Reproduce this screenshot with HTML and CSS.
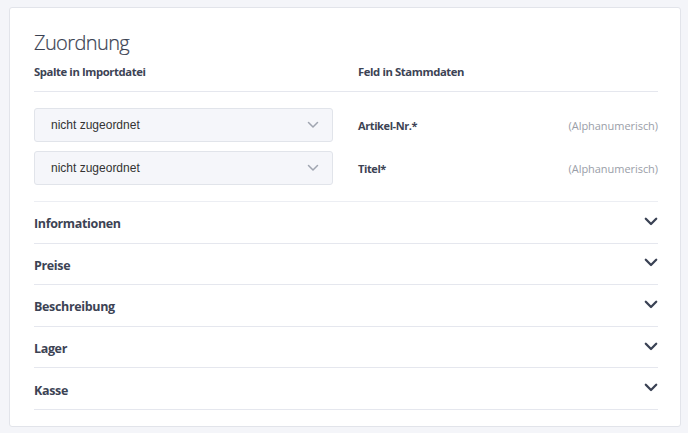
FILE: index.html
```html
<!DOCTYPE html>
<html lang="de">
<head>
<meta charset="utf-8">
<link rel="stylesheet" href="styles.css">
</head>
<body>
<div class="card">
  <h1 class="title">Zuordnung</h1>
  <div class="grid head">
    <div class="colhead">Spalte in Importdatei</div>
    <div class="colhead">Feld in Stammdaten</div>
  </div>
  <div class="mapping">
    <div class="grid maprow">
      <div class="select"><span>nicht zugeordnet</span>
        <svg class="sel-chev" viewBox="0 0 12 8" width="12" height="8"><path d="M1.5 1.5 L6 6 L10.5 1.5" fill="none" stroke="currentColor" stroke-width="1.5" stroke-linecap="round" stroke-linejoin="round"/></svg>
      </div>
      <div class="field"><span class="fname">Artikel-Nr.*</span><span class="ftype">(Alphanumerisch)</span></div>
    </div>
    <div class="grid maprow">
      <div class="select"><span>nicht zugeordnet</span>
        <svg class="sel-chev" viewBox="0 0 12 8" width="12" height="8"><path d="M1.5 1.5 L6 6 L10.5 1.5" fill="none" stroke="currentColor" stroke-width="1.5" stroke-linecap="round" stroke-linejoin="round"/></svg>
      </div>
      <div class="field"><span class="fname">Titel*</span><span class="ftype">(Alphanumerisch)</span></div>
    </div>
  </div>
  <div class="acc">
    <div class="acc-row"><span>Informationen</span><svg class="acc-chev" viewBox="0 0 14 9" width="14" height="9"><path d="M1.8 1.8 L7 7 L12.2 1.8" fill="none" stroke="currentColor" stroke-width="2.3" stroke-linecap="round" stroke-linejoin="round"/></svg></div>
    <div class="acc-row"><span>Preise</span><svg class="acc-chev" viewBox="0 0 14 9" width="14" height="9"><path d="M1.8 1.8 L7 7 L12.2 1.8" fill="none" stroke="currentColor" stroke-width="2.3" stroke-linecap="round" stroke-linejoin="round"/></svg></div>
    <div class="acc-row"><span>Beschreibung</span><svg class="acc-chev" viewBox="0 0 14 9" width="14" height="9"><path d="M1.8 1.8 L7 7 L12.2 1.8" fill="none" stroke="currentColor" stroke-width="2.3" stroke-linecap="round" stroke-linejoin="round"/></svg></div>
    <div class="acc-row"><span>Lager</span><svg class="acc-chev" viewBox="0 0 14 9" width="14" height="9"><path d="M1.8 1.8 L7 7 L12.2 1.8" fill="none" stroke="currentColor" stroke-width="2.3" stroke-linecap="round" stroke-linejoin="round"/></svg></div>
    <div class="acc-row"><span>Kasse</span><svg class="acc-chev" viewBox="0 0 14 9" width="14" height="9"><path d="M1.8 1.8 L7 7 L12.2 1.8" fill="none" stroke="currentColor" stroke-width="2.3" stroke-linecap="round" stroke-linejoin="round"/></svg></div>
  </div>
</div>
</body>
</html>
```

FILE: styles.css
```css
html, body {
  margin: 0;
  padding: 0;
}
body {
  background: #f4f5f9;
  padding: 7px 7px 0 9px;
  font-family: "Open Sans", "Noto Sans", sans-serif;
  color: #3c4354;
  box-sizing: border-box;
  height: 433px;
  overflow: hidden;
}
.card {
  background: #fff;
  border: 1px solid #e2e4ea;
  border-radius: 3px;
  height: 420px;
  box-sizing: border-box;
  padding: 22px 22px 0 24px;
}
.title {
  margin: 0;
  font-size: 20px;
  font-weight: 300;
  line-height: 26px;
  color: #3a4152;
  letter-spacing: -0.6px;
  -webkit-text-stroke: 0.2px #3a4152;
}
.grid {
  display: grid;
  grid-template-columns: 299px 1fr;
  column-gap: 25px;
}
.head {
  margin-top: 8px;
  padding-bottom: 11px;
  border-bottom: 1px solid #e5e7ee;
}
.colhead {
  font-size: 11.3px;
  font-weight: 700;
  line-height: 16px;
  color: #3c4354;
  letter-spacing: -0.4px;
}
.mapping {
  padding: 16px 0 16px;
  display: flex;
  flex-direction: column;
  gap: 9px;
  border-bottom: 1px solid #eceef3;
}
.maprow {
  align-items: center;
}
.select {
  height: 34px;
  box-sizing: border-box;
  background: #f5f6fa;
  border: 1px solid #e1e4ea;
  border-radius: 3px;
  display: flex;
  align-items: center;
  justify-content: space-between;
  padding: 0 13px 0 16px;
  font-family: "Liberation Sans", Arial, sans-serif;
  font-size: 12px;
  color: #333;
}
.sel-chev {
  color: #a0a5b0;
}
.field {
  display: flex;
  justify-content: space-between;
  align-items: center;
  font-size: 11px;
}
.fname {
  font-weight: 700;
  color: #3c4354;
  letter-spacing: -0.4px;
}
.ftype {
  color: #9a9ea8;
  letter-spacing: -0.05px;
}
.acc-row {
  height: 41.6px;
  box-sizing: border-box;
  border-bottom: 1px solid #e5e7ee;
  display: flex;
  align-items: center;
  justify-content: space-between;
  font-size: 12.5px;
  font-weight: 700;
  color: #3c4354;
  letter-spacing: -0.35px;
  padding-top: 3px;
}
.acc-chev {
  color: #3a4254;
  margin-top: -5px;
}
```
